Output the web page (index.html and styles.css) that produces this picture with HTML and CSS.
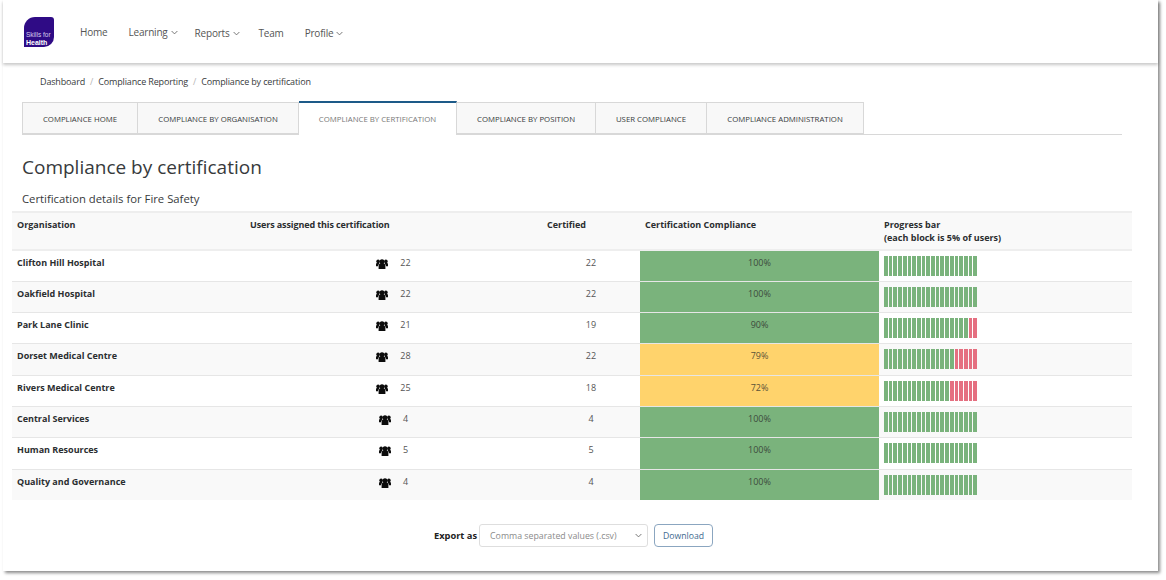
FILE: index.html
```html
<!DOCTYPE html>
<html lang="en">
<head>
<meta charset="utf-8">
<title>Compliance by certification</title>
<link rel="stylesheet" href="styles.css">
</head>
<body>
<svg class="defs" width="0" height="0" aria-hidden="true">
  <symbol id="users" viewBox="0 0 12 10">
    <circle cx="6" cy="2.7" r="2.5"/>
    <circle cx="2.1" cy="2.4" r="1.8"/>
    <circle cx="9.9" cy="2.4" r="1.8"/>
    <path d="M2.6 10V7C2.6 5.4 3.6 4.6 4.6 4.6h2.8C8.400 4.600 9.400 5.400 9.400 7v3z"/>
    <path d="M0 7.200V5.600C0 4.400.7 3.800 1.400 3.800h1.500L3.400 5C2.600 5.400 2.100 6.200 2 7.200zM12 7.200V5.600c0-1.200-.7-1.800-1.400-1.800H9.100L8.600 5c.8.400 1.300 1.200 1.400 2.200z"/>
  </symbol>
  <symbol id="chev" viewBox="0 0 8 5">
    <path d="M.7.8 4 4.1 7.3.8" fill="none" stroke="currentColor" stroke-width="1"/>
  </symbol>
</svg>
<div class="window">
  <header class="topbar">
    <div class="logo"><span>Skills for</span><b>Health</b></div>
    <nav class="nav">
      <a class="nav-item">Home</a>
      <a class="nav-item has-menu">Learning<svg class="chev"><use href="#chev"/></svg></a>
      <a class="nav-item has-menu low wide">Reports<svg class="chev"><use href="#chev"/></svg></a>
      <a class="nav-item low">Team</a>
      <a class="nav-item has-menu low">Profile<svg class="chev"><use href="#chev"/></svg></a>
    </nav>
  </header>
  <ol class="crumbs">
    <li>Dashboard</li><li class="sep">/</li><li>Compliance Reporting</li><li class="sep">/</li><li>Compliance by certification</li>
  </ol>
  <ul class="tabs">
    <li class="tab t1">Compliance Home</li>
    <li class="tab t2">Compliance by organisation</li>
    <li class="tab t3 active">Compliance by certification</li>
    <li class="tab t4">Compliance by position</li>
    <li class="tab t5">User compliance</li>
    <li class="tab t6">Compliance administration</li>
  </ul>
  <h1 class="title">Compliance by certification</h1>
  <h2 class="subtitle">Certification details for Fire Safety</h2>
  <table class="report">
    <colgroup><col class="c1"><col class="c2"><col class="c3"><col class="c4"><col class="c5"></colgroup>
    <thead>
      <tr><th>Organisation</th><th class="tight">Users assigned this certification</th><th>Certified</th><th>Certification Compliance</th><th>Progress bar<br>(each block is 5% of users)</th></tr>
    </thead>
    <tbody id="rows">
      <tr><th>Clifton Hill Hospital</th><td class="users"><svg class="ico"><use href="#users"/></svg>22</td><td class="num">22</td><td class="ok">100%</td><td class="barcell"><div class="bar" data-g="20"></div></td></tr>
      <tr><th>Oakfield Hospital</th><td class="users"><svg class="ico"><use href="#users"/></svg>22</td><td class="num">22</td><td class="ok">100%</td><td class="barcell"><div class="bar" data-g="20"></div></td></tr>
      <tr><th>Park Lane Clinic</th><td class="users"><svg class="ico"><use href="#users"/></svg>21</td><td class="num">19</td><td class="ok">90%</td><td class="barcell"><div class="bar" data-g="18"></div></td></tr>
      <tr><th>Dorset Medical Centre</th><td class="users"><svg class="ico"><use href="#users"/></svg>28</td><td class="num">22</td><td class="warn">79%</td><td class="barcell"><div class="bar" data-g="15"></div></td></tr>
      <tr><th>Rivers Medical Centre</th><td class="users"><svg class="ico"><use href="#users"/></svg>25</td><td class="num">18</td><td class="warn">72%</td><td class="barcell"><div class="bar" data-g="14"></div></td></tr>
      <tr><th>Central Services</th><td class="users"><svg class="ico"><use href="#users"/></svg>4</td><td class="num">4</td><td class="ok">100%</td><td class="barcell"><div class="bar" data-g="20"></div></td></tr>
      <tr><th>Human Resources</th><td class="users"><svg class="ico"><use href="#users"/></svg>5</td><td class="num">5</td><td class="ok">100%</td><td class="barcell"><div class="bar" data-g="20"></div></td></tr>
      <tr><th>Quality and Governance</th><td class="users"><svg class="ico"><use href="#users"/></svg>4</td><td class="num">4</td><td class="ok">100%</td><td class="barcell"><div class="bar" data-g="20"></div></td></tr>
    </tbody>
  </table>
  <div class="export">
    <span class="export-label">Export as</span>
    <div class="select"><span>Comma separated values (.csv)</span><svg class="chev"><use href="#chev"/></svg></div>
    <button class="btn" type="button">Download</button>
  </div>
</div>
<script src="bars.js"></script>
</body>
</html>
```

FILE: bars.js
```js
document.querySelectorAll('.bar').forEach(function (bar) {
  var green = Number(bar.dataset.g);
  for (var i = 0; i < 20; i++) {
    var block = document.createElement('i');
    block.className = i < green ? 'on' : 'off';
    bar.appendChild(block);
  }
});
```

FILE: styles.css
```css
* { box-sizing: border-box; }
html, body { margin: 0; padding: 0; background: #fff; }
body {
  width: 1166px;
  height: 580px;
  overflow: hidden;
  font-family: "Open Sans", "Noto Sans", sans-serif;
  color: #373a3c;
}
.defs { position: absolute; }

.window {
  margin-left: 3px;
  width: 1155px;
  height: 571px;
  background: #fff;
  box-shadow: 2px 2px 3px #8a8a8a;
}

.topbar {
  height: 63px;
  display: flex;
  align-items: flex-start;
  box-shadow: 0 2px 3px rgba(0, 0, 0, .22);
}
.logo {
  margin: 17px 0 0 21px;
  width: 30px;
  height: 30px;
  background: #2f0b85;
  border-radius: 11px 3px 10px 0;
  color: #fff;
  display: flex;
  flex-direction: column;
  justify-content: flex-end;
  padding: 0 0 1px 2px;
  font-family: "Liberation Sans", sans-serif;
  font-size: 6.5px;
  line-height: 7.5px;
  white-space: nowrap;
}
.logo span { color: #d6cfee; }
.logo b { font-size: 7px; }
.nav {
  display: flex;
  margin-left: 26px;
  font-size: 10px;
  letter-spacing: -.2px;
  color: #555;
}
.nav-item {
  display: block;
  margin-top: 25px;
  margin-right: 21px;
  line-height: 15px;
  white-space: nowrap;
}
.nav-item.low { margin-top: 26px; }
.nav-item.has-menu { margin-right: 17px; }
.nav-item.wide { margin-right: 19px; }
.chev { width: 7px; height: 5px; vertical-align: 1px; color: #666; }
.nav-item .chev { margin-left: 3px; }

.crumbs {
  list-style: none;
  display: flex;
  margin: 0;
  padding: 12px 0 0 37px;
  height: 39px;
  font-size: 9px;
  letter-spacing: -.15px;
  line-height: 14px;
  color: #373a3c;
}
.crumbs .sep { color: #b5b5b5; margin: 0 5px; }

.tabs {
  list-style: none;
  display: flex;
  margin: 0 0 0 19px;
  padding: 0;
  width: 1100px;
  height: 33px;
  border-bottom: 1px solid #d8d8d8;
}
.tab {
  height: 32px;
  border: 1px solid #d8d8d8;
  border-left-width: 0;
  background: #f8f8f8;
  font-size: 7.8px;
  line-height: 32px;
  text-transform: uppercase;
  text-align: center;
  white-space: nowrap;
  color: #373a3c;
}
.tab.t1 { width: 116px; border-left-width: 1px; }
.tab.t2 { width: 161px; }
.tab.t3 { width: 158px; }
.tab.t4 { width: 139px; }
.tab.t5 { width: 111px; }
.tab.t6 { width: 157px; }
.tab.active {
  height: 34px;
  margin-top: -1px;
  background: #fff;
  color: #777;
  border: 0;
  border-top: 2px solid #1d5a88;
  border-right: 1px solid #d8d8d8;
  line-height: 32px;
}

.title {
  margin: 19px 0 0 19px;
  font-size: 19px;
  line-height: 27px;
  font-weight: 400;
  color: #373a3c;
}
.subtitle {
  margin: 9px 0 0 19px;
  font-size: 11.3px;
  line-height: 17px;
  font-weight: 400;
  color: #373a3c;
}

.report {
  margin: 4px 0 0 9px;
  width: 1120px;
  table-layout: fixed;
  border-collapse: collapse;
  font-size: 9px;
  line-height: 13px;
}
.c1 { width: 233px; }
.c2 { width: 297px; }
.c3 { width: 98px; }
.c4 { width: 239px; }
.c5 { width: 253px; }
.report th, .report td {
  padding: 5px 5px 0;
  vertical-align: top;
  text-align: left;
  border-top: 1px solid #e6e6e6;
}
.report th { font-weight: 700; color: #2b2e30; }
.report th.tight { letter-spacing: -.12px; }
.report thead tr { height: 38px; background: #f9f9f9; }
.report thead th { border-top: 2px solid #eee; border-bottom: 2px solid #eee; }
.report tbody tr { height: 31.3px; }
.report tbody tr:nth-child(even) { background: #f9f9f9; }
.report td { color: #555; }
.users, .num, .ok, .warn { text-align: center !important; }
.ok { background: #7ab37c; color: #3d4a3d !important; }
.warn { background: #ffd36c; color: #5a5238 !important; }
.ico { width: 12px; height: 10px; margin: 0 12px 0 0; vertical-align: -3px; fill: #0c0c0c; }
.bar { display: flex; gap: 1px; width: 93px; height: 20px; }
.bar i { flex: 1; }
.bar .on { background: #7ab37c; }
.bar .off { background: #e56f80; }

.export {
  display: flex;
  align-items: center;
  justify-content: center;
  gap: 2px;
  margin: 24px 0 0 9px;
  width: 1120px;
  padding-left: 3px;
  font-size: 9.3px;
}
.export-label { font-weight: 700; color: #222; }
.select {
  display: flex;
  align-items: center;
  justify-content: space-between;
  width: 169px;
  height: 23px;
  padding: 0 5px 0 10px;
  border: 1px solid #dedede;
  border-radius: 3px;
  color: #8b8b8b;
  font-size: 8.8px;
}
.btn {
  margin-left: 4px;
  width: 59px;
  height: 23px;
  padding: 0;
  background: #fff;
  border: 1px solid #8ba6c0;
  border-radius: 4px;
  font: inherit;
  font-size: 8.7px;
  color: #3f6a8f;
}
```
